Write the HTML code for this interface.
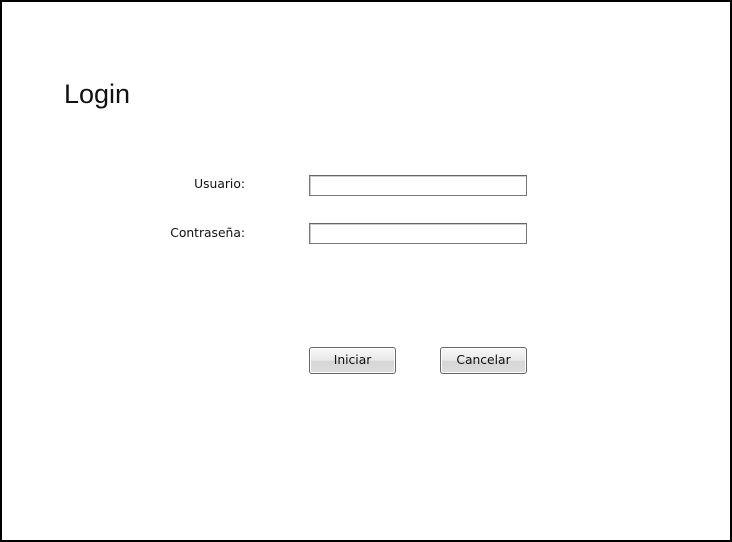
<!DOCTYPE html>
<html><head><meta charset="utf-8"><style>
html,body{margin:0;padding:0;background:#fff;}
body{width:732px;height:542px;position:relative;overflow:hidden;font-family:"DejaVu Sans","Liberation Sans",sans-serif;}
.frame{position:absolute;left:0;top:0;width:728px;height:538px;border:2px solid #000;}
.title{position:absolute;left:64px;top:79px;font-size:27px;font-family:"Liberation Sans",sans-serif;color:#111;}
.lbl{position:absolute;font-size:12.3px;color:#111;text-align:right;width:150px;left:95px;}
.inp{position:absolute;left:309px;width:216px;height:19px;border:1px solid #777;border-top-color:#666;box-shadow:inset 1px 1px 0 #ccc;background:#fff;}
.btn{position:absolute;top:347px;width:85px;height:25px;border:1px solid #666;border-radius:3px;background:linear-gradient(#f8f8f8,#e8e8e8 50%,#d6d6d6 52%,#dcdcdc);font-size:12.3px;color:#111;text-align:center;line-height:25px;box-shadow:inset 0 0 0 1px #fff;}
</style></head><body>
<div class="frame"></div>
<div class="title">Login</div>
<div class="lbl" style="top:177px;">Usuario:</div>
<div class="lbl" style="top:226px;">Contraseña:</div>
<div class="inp" style="top:175px;"></div>
<div class="inp" style="top:223px;"></div>
<div class="btn" style="left:309px;">Iniciar</div>
<div class="btn" style="left:440px;">Cancelar</div>
</body></html>
